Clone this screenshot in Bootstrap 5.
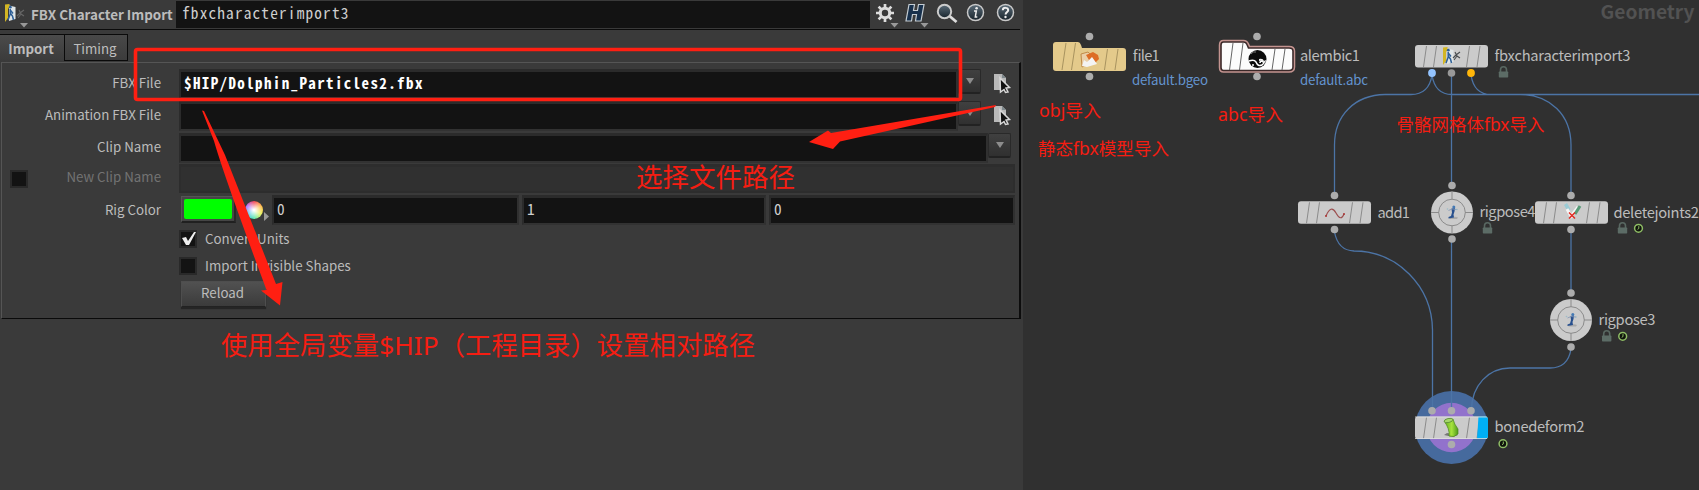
<!DOCTYPE html>
<html lang="zh-CN">
<head>
<meta charset="utf-8">
<meta name="viewport" content="width=device-width, initial-scale=1">
<title>FBX Character Import</title>
<link rel="stylesheet" href="https://cdn.jsdelivr.net/npm/bootstrap@5.3.0/dist/css/bootstrap.min.css">
<style>
body{background:#303030;color:#bcbcbc;font-family:"Noto Sans CJK SC","Noto Sans",sans-serif;font-size:13.3px;line-height:20px;height:490px;overflow:hidden}
.app{height:490px}
.params{width:1023px;background:#3a3a3a}
.titlebar{height:30px;border-bottom:1.5px solid #0b0b0b;width:1020px;padding-left:3px}
.titlebar .kind{font-weight:700;font-size:13.4px;width:148px;padding-left:3px;white-space:nowrap;position:relative;top:-1px;flex:none}
.mono{font-family:"Noto Sans Mono CJK SC","Source Code Pro","DejaVu Sans Mono",monospace;font-size:15.3px;letter-spacing:1.17px;color:#cfcfcf}
.mono.fw-bold{font-size:15px;letter-spacing:1.38px}
.opname{background:#131313;width:694px;height:27px;padding-left:6px;line-height:23px}
.tabbar{height:32px;padding-top:4px}
.ptab{height:28px;line-height:27px;text-align:center;background:linear-gradient(#484848,#3c3c3c);color:#bdbdbd;border:1.5px solid #0a0a0a}
.ptab.on{width:64px;border-width:1px 0 0;background:linear-gradient(#4b4b4b,#3a3a3a);font-weight:700;padding-right:2px}
.ptab.off{width:64px;height:27px;padding-right:2px}
.sheet{width:1020px;height:257px;border:1px solid #555;border-right:2px solid #0c0c0c;border-bottom:1.5px solid #0a0a0a;padding-top:6px;margin-left:1px}
.prow{margin-bottom:2px}
.plabel{width:159px;margin-right:18px;text-align:right;white-space:nowrap;flex:none;padding-top:4px}
.field{background:#131313;border:2px solid #2b2b2b;border-top-width:3px;border-right-color:#303030;border-bottom-color:#323232;height:30px;padding-left:3px;line-height:21px;flex:none}
.box{width:18px;height:18px;border:2px solid #292929;background:#131313;flex:none}
.drop{width:23px;height:25px;border-radius:2px;background:linear-gradient(#404040,#303030);border:1px solid #292929;border-bottom:2px solid #222;display:flex;align-items:center;justify-content:center;flex:none}
.drop::after{content:"";border:4px solid transparent;border-top:6px solid #8d8d8d;border-bottom:0}
.swatch{width:55px;height:27px;background:#464646;border:1px solid #555;border-bottom:2px solid #202020;border-right:2px solid #292929;padding:2px;flex:none}
.swatch i{display:block;height:20px;background:#0f0;border-radius:2px}
.wheel{width:18px;height:18px;border-radius:50%;background:radial-gradient(circle,#fff 5%,rgba(255,255,255,0) 72%),conic-gradient(#f03c50,#ffb43c,#e6f050,#50e6aa,#3cbee6,#aa64ff,#f03c50)}
.reload{width:85px;height:26px;background:linear-gradient(#515151,#3b3b3b);border:1px solid #4e4e4e;border-bottom-color:#222;box-shadow:0 2px 1px #252525;text-align:center;line-height:22px;padding-right:2px}
.marks{left:0;top:0;pointer-events:none}
.marks text,.note{font-family:"Noto Sans","Noto Sans CJK SC",sans-serif;fill:#f51d12;font-weight:400}
.net{background:#303030;width:676px;height:490px;flex:none}
.net .nm{font-size:14.7px;fill:#bcbcbc}
.net .fn{font-size:13.3px;fill:#6494cf}
.wire{fill:none;stroke:#4c74a6;stroke-width:1.3}
.dot{fill:#acacac}
.shell{fill:#cbcbcb}
.rib{stroke:#8b8b8b;stroke-width:1;fill:none}
</style>
</head>
<body>
<svg width="0" height="0" class="position-absolute">
 <defs>
  <linearGradient id="gb" x2="0" y2="1"><stop stop-color="#5b6c78"/><stop offset="1" stop-color="#17232c"/></linearGradient>
  <linearGradient id="gg" x2="1"><stop stop-color="#5ea81c"/><stop offset=".55" stop-color="#a6e33d"/><stop offset="1" stop-color="#4e9a1c"/></linearGradient>
  <g id="walker"><path d="M4 1.5 10.500 3V15L4 17Z" fill="#dfe5e7"/><path d="M0 .5 4.500 0V3L3 5V14L0 18Z" fill="#d3b624"/><circle cx="5.300" cy="3.200" r="1.400" fill="#2d5f97"/><path d="M5.200 5V10L3 16M5.200 9 7.500 12 8.500 16M5.200 6 8 9.500" fill="none" stroke="#2d5f97" stroke-width="1.500"/></g>
  <g id="mocap"><path d="M10 11 13 8 17 5M12 5 14 9 17 11M11 13l3-4" stroke-width="1.100" fill="none"/></g>
  <g id="pick"><path d="M0 0H8L12 4V16H0Z" fill="#b9b9b9"/><path d="M8 0 12 4H8Z" fill="#7f898d"/><path d="M6 4 15.500 13.500 12 14 14 18 11.500 18.500 10 15.500 6.500 18Z" fill="#111" stroke="#d8d8d8" stroke-width="1.500"/></g>
  <g id="lock"><path d="M-3 0v-2.200a3 3 0 0 1 6 0V0" fill="none" stroke="#596862" stroke-width="1.600"/><rect x="-4.700" y="-.5" width="9.400" height="6" rx=".7" fill="#5c6c66"/></g>
  <g id="clock"><circle r="3.900" fill="#0e130b" stroke="#8fbd65" stroke-width="1.500"/><path d="M.3-2.200V.3L-1 1" fill="none" stroke="#8fbd65" stroke-width="1"/></g>
  <g id="ribs"><path class="rib" d="M11.500 1 8.500 22M21.500 1 18.500 22M54.500 1 51.500 22M65 1 62 22"/></g>
  <g id="slab"><rect class="shell" width="73" height="22.500" rx="3"/><use href="#ribs"/></g>
  <g id="wheelnode"><circle r="21" class="shell"/><circle r="13.300" class="rib"/><path class="rib" d="M0-21V-13M0 21V13M-21 0H-13M21 0H13"/><path d="M-3 6Q2 3 6 5L5 6.500H-2Z" fill="#aaa"/><path d="M-.5-4 3-4.500 2.500-1 1.500 2 2 5 -3.500 6V4.500L-1 3.500 0 0Z" fill="#28508e"/><path d="M-3.500-2 0-3.500 5-3" stroke="#7d93b4" stroke-width=".8" fill="none"/><circle cx="1.800" cy="-5.500" r="1.500" fill="#4379b4"/><circle cx="-4.500" cy="-3.500" r=".8" fill="#9cbcc9"/><circle cx="5" cy="-3" r=".8" fill="#9cbcc9"/></g>
 </defs>
</svg>
<div class="app d-flex">
 <section class="params position-relative flex-shrink-0">
  <header class="titlebar d-flex align-items-center">
   <svg width="25" height="29" class="flex-shrink-0"><use href="#walker" x="2" y="4"/><use href="#mocap" x="4" y="5" stroke="#666"/><path d="M17 23h8l-4 4.500Z" fill="#999"/></svg>
   <span class="kind">FBX Character Import</span>
   <div class="opname mono">fbxcharacterimport3</div>
   <svg width="150" height="29">
    <g transform="translate(15 13)"><circle r="4.700" fill="none" stroke="#ddd" stroke-width="3"/><path d="M0-9V-5M0 9V5M-9 0H-5M9 0H5M-6.400-6.400-3.500-3.500M6.400 6.400 3.500 3.500M-6.400 6.400-3.500 3.500M6.400-6.400 3.500-3.500" stroke="#ddd" stroke-width="2.700"/></g>
    <path d="M20.500 23h8l-4 4.500ZM50.500 23h8l-4 4.500Z" fill="#999"/>
    <path d="M39 4.500h5.500l-1 6h4l1-6h5.500l-3 16.500h-5.500l1-6.500h-4l-1 6.500h-5.500Z" fill="#17304c" stroke="#c4ccd2" stroke-width="1.200"/>
    <path d="m79.500 16 7 6" stroke="#ddd" stroke-width="2.800"/><circle cx="74.500" cy="11.500" r="6.700" fill="url(#gb)" stroke="#ccc" stroke-width="2"/>
    <circle cx="105.500" cy="12.500" r="8" fill="url(#gb)" stroke="#c9c9c9" stroke-width="1.500"/><circle cx="106.600" cy="8.300" r="1.300" fill="#eee"/><path d="M104 11h2.300l-1 6h2" fill="none" stroke="#eee" stroke-width="1.500"/>
    <circle cx="135.500" cy="12.500" r="8" fill="url(#gb)" stroke="#c9c9c9" stroke-width="1.500"/><path d="M132.800 10.200c.2-3.200 5.400-3 5.400 0 0 1.700-2.600 1.900-2.600 4.300" fill="none" stroke="#eee" stroke-width="2"/><circle cx="135.500" cy="17" r="1.200" fill="#eee"/>
   </svg>
  </header>
  <nav class="tabbar d-flex"><div class="ptab on">Import</div><div class="ptab off">Timing</div></nav>
  <main class="sheet">
   <div class="prow d-flex"><div class="plabel">FBX File</div><div class="field mono fw-bold text-white" style="width:779px">$HIP/Dolphin_Particles2.fbx</div><div class="drop"></div><svg class="ms-2 mt-1" width="24" height="22"><use href="#pick" x="5" y="1"/></svg></div>
   <div class="prow d-flex"><div class="plabel">Animation FBX File</div><div class="field" style="width:779px"></div><div class="drop"></div><svg class="ms-2 mt-1" width="24" height="22"><use href="#pick" x="5" y="1"/></svg></div>
   <div class="prow d-flex"><div class="plabel">Clip Name</div><div class="field" style="width:809px"></div><div class="drop"></div></div>
   <div class="prow d-flex" style="margin-top:-1px"><div class="plabel d-flex justify-content-between align-items-center pt-0" style="color:#737373"><span class="box" style="margin-left:8px"></span><span class="pb-1">New Clip Name</span></div><div class="field" style="width:836px;background:#303030;height:29px;border-color:#2d2d2d"></div></div>
   <div class="prow d-flex"><div class="plabel" style="padding-top:5px">Rig Color</div><div class="swatch" style="margin:1px 0 0 2px"><i></i></div><div class="d-flex align-items-center flex-shrink-0" style="width:36px;padding-left:9px"><span class="wheel flex-shrink-0"></span><svg width="7" height="22" class="flex-shrink-0"><path d="M1 13v9l5-4.500Z" fill="#999"/></svg></div>
    <div class="d-flex mono" style="gap:3px"><div class="field" style="width:247px">0</div><div class="field" style="width:244px">1</div><div class="field" style="width:246px">0</div></div></div>
   <div class="d-flex align-items-center" style="padding-left:177px;height:26px;margin-top:-1px"><span class="box"><svg width="16" height="14" class="d-block"><path d="m1 6 4-1 2 4 6-9h2L8 13H5Z" fill="#eee"/></svg></span><span style="margin-left:8px">Convert Units</span></div>
   <div class="d-flex align-items-center" style="padding-left:177px;height:27px"><span class="box"></span><span style="margin-left:8px">Import Invisible Shapes</span></div>
   <div class="reload" style="margin:2px 0 0 179px">Reload</div>
  </main>
  <svg class="marks position-absolute" width="1023" height="490">
   <rect x="135.500" y="49.500" width="825" height="50" rx="2" fill="none" stroke="#ff1f12" stroke-width="3.600"/>
   <path d="M202 110.500 204 111Q216 136 225 155L276 284 282.500 282 280 305.500 261 290.500 266.500 290Q224 176 214 141Z" fill="#ff1f12"/>
   <path d="M996 105 995 107 840 141.500 833 149 809 142 828 130.500 831 133Z" fill="#ff1f12"/>
   <text x="636" y="186.500" font-size="26" textLength="159" lengthAdjust="spacingAndGlyphs">选择文件路径</text>
   <text x="221" y="354.500" font-size="26" textLength="534" lengthAdjust="spacingAndGlyphs">使用全局变量$HIP（工程目录）设置相对路径</text>
  </svg>
 </section>
 <svg class="net" viewBox="1023 0 676 490">
  <text x="1600.500" y="19" font-size="18.500" font-weight="700" fill="#525252" textLength="94" lengthAdjust="spacingAndGlyphs">Geometry</text>
  <circle cx="1451.500" cy="427.500" r="36.500" fill="#466a9d"/><circle cx="1451.500" cy="427.500" r="24.700" fill="#9272cc"/>
  <g class="wire">
   <path d="M1432 75Q1429 94.500 1411 94.500H1385C1355 95 1334.500 115 1334.500 145V193M1432 75Q1435 94.500 1452 94.500H1699M1471 75Q1474 94.500 1491 94.500M1520 94.500C1550 94.500 1571 115 1571 145V193M1451.500 76V183M1451.500 240V408M1571 232V290M1334.500 232Q1338 250.500 1354 251C1397 251 1432 286 1432.500 330V408M1571 349Q1568 368 1550 368H1510C1488 368 1472 386 1471.500 409"/>
  </g>
  <g class="dot"><circle cx="1089.500" cy="36.500" r="3.800"/><circle cx="1089.500" cy="76.500" r="3.800"/><circle cx="1257" cy="36.500" r="3.800"/><circle cx="1257" cy="76.500" r="3.800"/><circle cx="1451.500" cy="73" r="3.800" fill="#999"/><circle cx="1432" cy="73" r="3.900" fill="#93c3ff"/><circle cx="1471" cy="73" r="3.900" fill="#ffb60a"/>
   <circle cx="1334.500" cy="195.500" r="3.800"/><circle cx="1334.500" cy="229.500" r="3.800"/><circle cx="1452" cy="185.500" r="3.800"/><circle cx="1452" cy="239" r="3.800"/><circle cx="1571" cy="195.500" r="3.800"/><circle cx="1571" cy="229.500" r="3.800"/><circle cx="1571" cy="293" r="3.800"/><circle cx="1571" cy="347" r="3.800"/><circle cx="1432" cy="410.700" r="3.800"/><circle cx="1451.500" cy="410.700" r="3.800"/><circle cx="1471" cy="410.700" r="3.800"/><circle cx="1451.500" cy="444.500" r="3.800"/></g>

  <path d="M1056 42H1078Q1080 42 1081 45L1082 48H1123Q1126 48 1126 51V68Q1126 71 1123 71H1056Q1053 71 1053 68V45Q1053 42 1056 42Z" fill="#e4ca8b"/>
  <path d="M1066 43 1062 70M1075.500 43 1071.500 70M1107.500 49 1104.500 70M1118 49 1115 70" stroke="#a8935f" fill="none"/>
  <path d="M1081 54 1088 52 1091 55 1088 64 1082 67Z" fill="#ead0a8" stroke="#c18b48"/><path d="M1086 55 1093 52 1098 55 1099 59 1094 64 1089 60Z" fill="#dd6d25"/><path d="M1082 66 1084 60 1087 62 1092 57 1097 64 1087 67Z" fill="#f4f4f4"/>
  <path d="M1223.500 42H1243.500Q1246 42 1247 44.500L1248.500 48H1289Q1293 48 1293 51V67Q1293 70.500 1289 70.500H1223.500Q1221 70.500 1221 67.500V45Q1221 42 1223.500 42Z" fill="#fff" stroke="#c49490" stroke-width="4.500"/>
  <path d="M1223.500 42H1243.500Q1246 42 1247 44.500L1248.500 48H1289Q1293 48 1293 51V67Q1293 70.500 1289 70.500H1223.500Q1221 70.500 1221 67.500V45Q1221 42 1223.500 42Z" fill="#fcfcfc" stroke="#3b2929" stroke-width="1.600"/>
  <path d="M1233 43 1229.500 70M1243 43 1239.500 70M1275 49 1272 70M1285 49 1282 70" stroke="#666" fill="none"/>
  <circle cx="1257.500" cy="59" r="9" fill="#0b0b0b"/><path d="M1249 61q5-2 7 1 2 5 6 3 3-2 0-4-2 0-2 2" fill="none" stroke="#fff" stroke-width="1.500"/><path d="M1259 59q4-1 5 2l2-1-1 4q-2-4-6-3Z" fill="#eee"/><circle cx="1253" cy="65" r="1" fill="#fff"/><path d="M1251 54q2-3 5-2" stroke="#777" fill="none"/>

  <use href="#slab" x="1415" y="45"/><use href="#walker" x="1443" y="47"/><use href="#mocap" x="1443" y="47" stroke="#484d50"/>
  <use href="#slab" x="1298" y="201.300"/><path d="M1326 216q5-12 10-3t8 1" fill="none" stroke="#9c5050" stroke-width="1.200"/><circle cx="1326" cy="216" r="1" fill="#a33"/><circle cx="1344" cy="214" r="1" fill="#a33"/>
  <use href="#wheelnode" x="1452" y="212.500"/><use href="#wheelnode" x="1571" y="320"/>
  <text class="nm" x="1479.500" y="217" textLength="56">rigpose4</text>
  <use href="#slab" x="1535" y="201.300"/>
  <path d="m1565.500 204 3.500 6" stroke="#9acbd5" stroke-width="3.500"/><path d="m1567 209 5 9M1578 207l-6 8" stroke="#f5f5f5" stroke-width="3"/><path d="m1580 206-5 8" stroke="#579b77" stroke-width="3"/><path d="m1569 212.500 6 6m0-6-6 6" stroke="#e02e25" stroke-width="1.600"/>
  <use href="#slab" x="1415" y="416.500"/><path d="M1478.500 416.500H1485Q1488 416.500 1488 419.500V436Q1488 439 1485 439H1477Z" fill="#00aff5"/><path d="M1415 417H1487M1415 438.500H1487" stroke="#dedede" stroke-width=".8"/>
  <path d="M1447 433 1444 435 1453 437 1458 435Z" fill="#777"/><path d="M1444 421Q1449 418 1453 419 1454 424 1458 429V434Q1454 438 1449 436 1450 429 1444 421Z" fill="url(#gg)" stroke="#4d871f" stroke-width=".7"/><ellipse cx="1448.500" cy="420.500" rx="4.300" ry="2" fill="#a6d76b" stroke="#5c8b39" stroke-width=".8" transform="rotate(-12 1448.500 420.500)"/>

  <g class="nm"><text x="1132" y="61" textLength="27">file1</text><text x="1300" y="61" textLength="60">alembic1</text><text x="1494.500" y="61" textLength="136">fbxcharacterimport3</text><text x="1377.500" y="218" textLength="32.500">add1</text><text x="1613.500" y="217.500" textLength="85.500">deletejoints2</text><text x="1598.500" y="324.500" textLength="57">rigpose3</text><text x="1494.500" y="432" textLength="90">bonedeform2</text></g>
  <g class="fn"><text x="1132" y="85" textLength="76">default.bgeo</text><text x="1300" y="85" textLength="68">default.abc</text></g>
  <use href="#lock" x="1503.500" y="72"/><use href="#lock" x="1487.500" y="228"/><use href="#lock" x="1622.500" y="228"/><use href="#lock" x="1606.700" y="336"/>
  <use href="#clock" x="1638.500" y="228.300"/><use href="#clock" x="1622.700" y="336.300"/><use href="#clock" x="1503" y="443.700"/>
  <g class="note" font-size="17.500"><text x="1039" y="117" textLength="62" lengthAdjust="spacingAndGlyphs">obj导入</text><text x="1038" y="154.500" textLength="131" lengthAdjust="spacingAndGlyphs">静态fbx模型导入</text><text x="1218" y="121" textLength="65" lengthAdjust="spacingAndGlyphs">abc导入</text><text x="1396.500" y="130.500" textLength="148" lengthAdjust="spacingAndGlyphs">骨骼网格体fbx导入</text></g>
 </svg>
</div>
<script src="https://cdn.jsdelivr.net/npm/bootstrap@5.3.0/dist/js/bootstrap.bundle.min.js"></script>
</body>
</html>
